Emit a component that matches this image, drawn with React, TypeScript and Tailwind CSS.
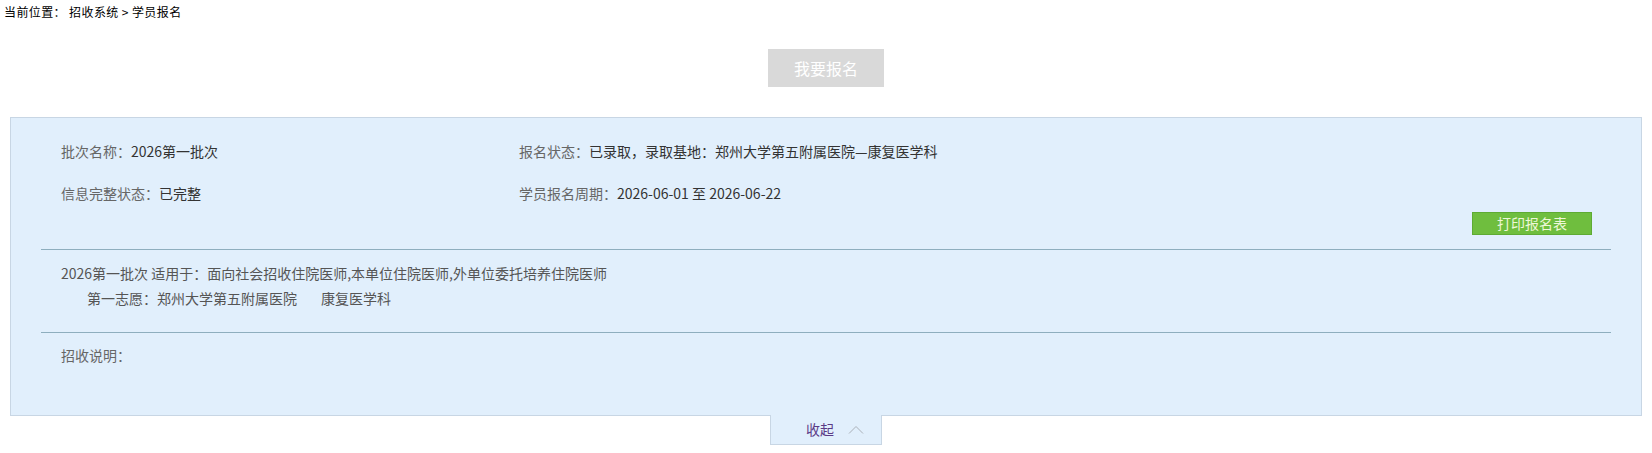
import React from "react";

const font = {
  fontFamily: '"Microsoft YaHei", "Noto Sans CJK SC", "Noto Sans", sans-serif',
};

const Field = ({ label, value }: { label: string; value: string }) => (
  <div className="leading-[20px] text-[14px]">
    <span className="text-[#666]">{label}</span>
    <span className="text-[#333]">{value}</span>
  </div>
);

export default function App() {
  return (
    <div className="w-full min-h-[453px] bg-white" style={font}>
      {/* breadcrumb */}
      <div className="h-[24px] pl-[4px] pt-[3px] text-[12px] leading-[18px] tracking-[0.4px] text-black">
        当前位置： 招收系统 &gt; 学员报名
      </div>

      <div className="flex justify-center pt-[25px]">
        <button className="w-[116px] h-[38px] bg-[#d9d9d9] text-white text-[16px]">
          我要报名
        </button>
      </div>

      {/* batch panel */}
      <div className="mx-[10px] mt-[30px] h-[299px] border border-[#c8d6e4] bg-[#e1effc] flex flex-col">
        <div className="pt-[23px] pl-[50px] grid grid-cols-[458px_1fr] gap-y-[22px]">
          <Field label="批次名称：" value="2026第一批次" />
          <Field label="报名状态：" value="已录取，录取基地：郑州大学第五附属医院—康复医学科" />
          <Field label="信息完整状态：" value="已完整" />
          <Field label="学员报名周期：" value="2026-06-01 至 2026-06-22" />
        </div>
        <div className="flex justify-end pr-[49px] mt-[9px]">
          <button className="w-[120px] h-[23px] bg-[#6fbe3e] border border-[#5eab33] text-[#eef7d8] text-[14px] leading-[21px]">
            打印报名表
          </button>
        </div>
        <div className="mx-[30px] mt-[14px] h-px bg-[#8eaebe]" />

        <div className="pl-[50px] pt-[13px] flex flex-col gap-[5px] text-[14px] leading-[20px] text-[#555]">
          <div>2026第一批次 适用于：面向社会招收住院医师,本单位住院医师,外单位委托培养住院医师</div>
          <div className="pl-[26px] flex">
            <span>第一志愿：郑州大学第五附属医院</span>
            <span className="ml-[24px]">康复医学科</span>
          </div>
        </div>
        <div className="mx-[30px] mt-[24px] h-px bg-[#8eaebe]" />

        <div className="pl-[50px] pt-[12px] text-[14px] leading-[20px] text-[#666]">
          招收说明：
        </div>
      </div>

      {/* collapse tab */}
      <div className="flex justify-center -mt-px">
        <div className="w-[112px] h-[30px] bg-[#e1effc] border border-t-0 border-[#c8d6e4] flex items-center justify-center gap-[14px] pl-[18px]">
          <span className="text-[14px] text-[#5b3a86]">收起</span>
          <svg width="16" height="9" viewBox="0 0 16 9" fill="none">
            <path d="M1 8.5 L8 1.5 L15 8.5" stroke="#aab0b8" strokeWidth="1" />
          </svg>
        </div>
      </div>
    </div>
  );
}
